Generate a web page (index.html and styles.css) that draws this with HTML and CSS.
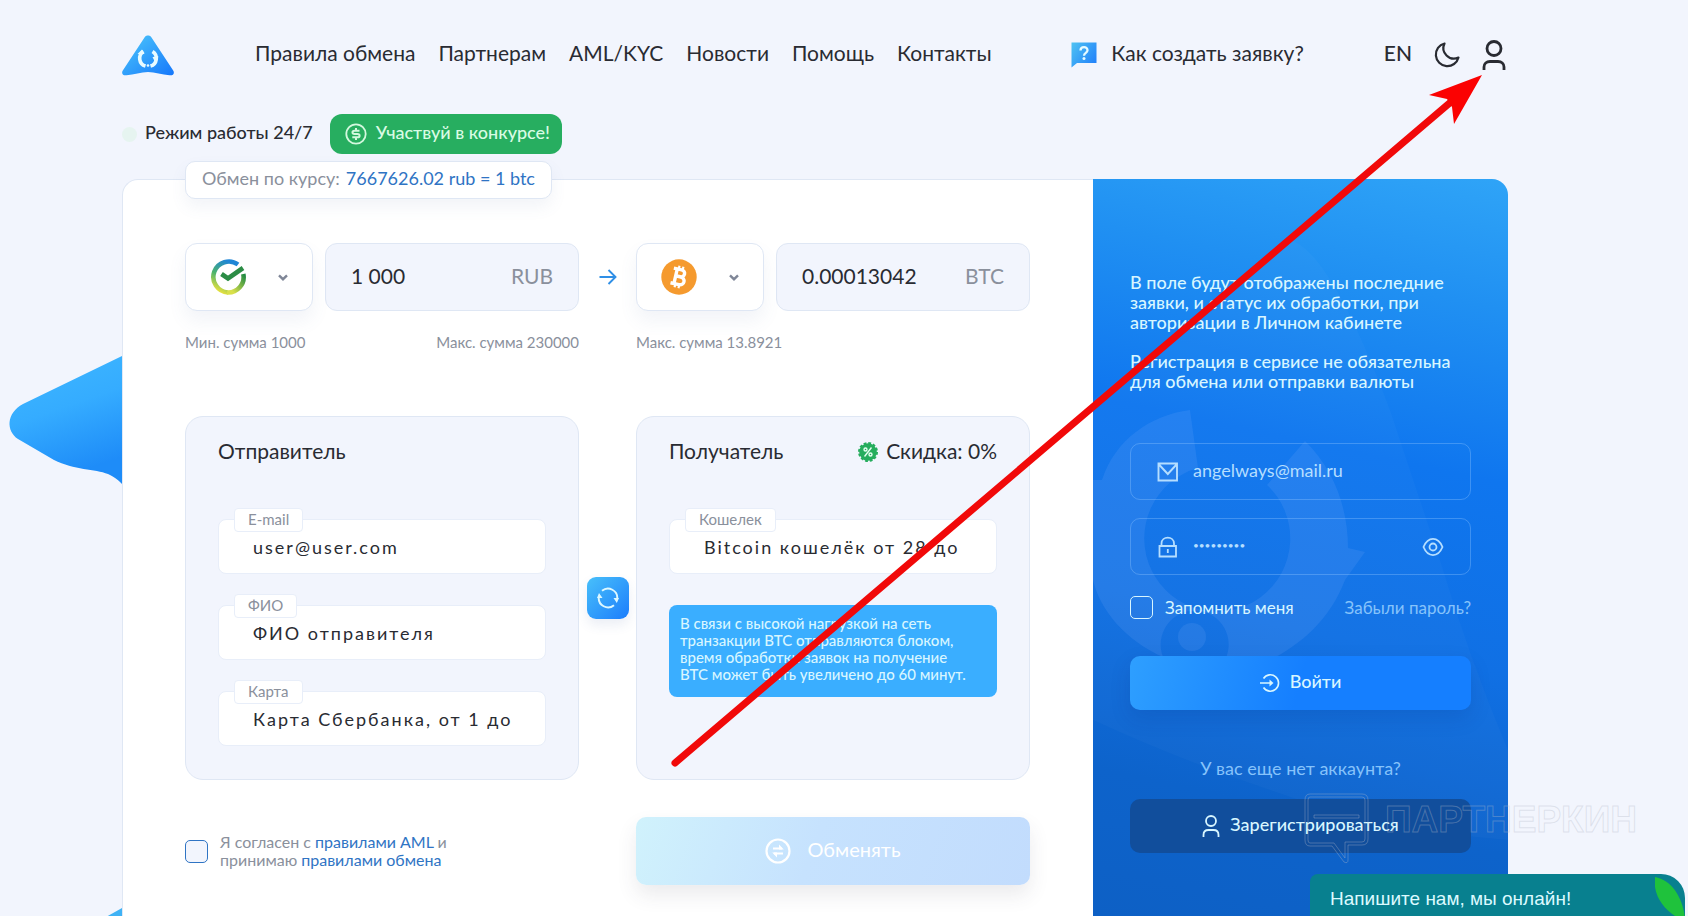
FILE: index.html
```html
<!DOCTYPE html>
<html lang="ru">
<head>
<meta charset="utf-8">
<meta name="viewport" content="width=device-width, initial-scale=1">
<title>Обмен валют</title>
<link rel="stylesheet" href="styles.css">
</head>
<body>
<div class="page">
  <svg class="blob" width="122" height="600" viewBox="0 340 122 600" aria-hidden="true">
    <defs><linearGradient id="gBlob" x1="0" y1="0" x2="0.3" y2="1"><stop offset="0" stop-color="#3fb8ff"/><stop offset="0.5" stop-color="#35acff"/><stop offset="1" stop-color="#1e8cf8"/></linearGradient></defs>
    <path fill="url(#gBlob)" d="M122 356 23 404C6 413 6 431 18 439L54 460C74 470 95 469 108 474 115 477 119 481 122 484Z"/>
    <path fill="#3fb2f5" d="M122 908 106 917H122Z"/>
  </svg>

  <header class="header">
    <a class="logo" href="#" aria-label="Главная">
      <svg width="52" height="41" viewBox="0 0 52 41">
        <defs><linearGradient id="gLogo" x1="0" y1="0" x2="1" y2="1"><stop offset="0.15" stop-color="#45bdfb"/><stop offset="1" stop-color="#1677fb"/></linearGradient></defs>
        <path fill="url(#gLogo)" d="M22.500 2.500C24-.1 28-.1 29.500 2.500L51.200 35.500C53 38.500 51 40.800 47.500 40.300 40 39.800 33 37 26 37 19 37 12 39.800 4.500 40.300 1 40.800-1 38.500.8 35.500Z"/>
        <g fill="none" stroke="#e9fbff" stroke-width="3.600"><path d="M21.500 16.500A8 8 0 0 0 23.500 31"/><path d="M30.500 16.500A8 8 0 0 1 28.500 31"/></g>
        <path fill="#e9fbff" d="M15.500 19 20 14.500 22.500 19ZM36.500 21.500 33.500 28 30.500 22Z"/><circle cx="26" cy="30.500" r="1.300" fill="#e9fbff"/>
      </svg>
    </a>
    <nav class="nav lift">
      <a href="#">Правила обмена</a><a href="#">Партнерам</a><a href="#">AML/KYC</a><a href="#">Новости</a><a href="#">Помощь</a><a href="#">Контакты</a>
    </nav>
    <a class="howto" href="#">
      <svg width="26" height="26" viewBox="0 0 26 26" aria-hidden="true">
        <defs><linearGradient id="gHelp" x1="0" y1="0" x2="1" y2="0.7"><stop offset="0" stop-color="#4fc3f2"/><stop offset="1" stop-color="#2484fa"/></linearGradient></defs>
        <path fill="url(#gHelp)" d="M1 .5H25.500V21H6L.5 25.500V.5Z"/>
        <path fill="none" stroke="#e6fbff" stroke-width="2.300" d="M9.500 8.500C9.500 4 16.500 4 16.500 8.300 16.500 11 13 10.800 13 13.800"/><circle cx="13" cy="16.500" r="1.500" fill="#e6fbff"/>
      </svg>
      <span class="lift">Как создать заявку?</span>
    </a>
    <div class="tools">
      <a class="lang lift" href="#">EN</a>
      <button class="icon-btn" type="button" aria-label="Тёмная тема">
        <svg width="26" height="26" viewBox="0 0 26 26" fill="none" stroke="#292b32" stroke-width="2.200" stroke-linejoin="round"><path d="M10.500 1.500A11.500 11.500 0 1 0 24.500 15.500 10.500 10.500 0 0 1 10.500 1.500Z"/></svg>
      </button>
      <button class="icon-btn" type="button" aria-label="Личный кабинет">
        <svg width="24" height="30" viewBox="0 0 24 30" fill="none" stroke="#292b32" stroke-width="2.800"><circle cx="12" cy="8.500" r="7"/><path d="M2 30V27C2 23.500 4.500 21.500 8 21.500H16C19.500 21.500 22 23.500 22 27V30"/></svg>
      </button>
    </div>
  </header>

  <div class="status">
    <span class="dot"></span>
    <span class="hours lift">Режим работы 24/7</span>
    <a class="contest" href="#">
      <svg width="22" height="22" viewBox="0 0 22 22" fill="none" stroke="#d3f8de" aria-hidden="true"><circle cx="11" cy="11" r="9.700" stroke-width="1.800"/><path stroke-width="2" d="M14.500 7.700H9.500C6.800 7.700 6.800 11 9.500 11H12.500C15.300 11 15.300 14.300 12.500 14.300H7.300M11 5V7.500M11 14.300V17"/></svg>
      <span class="lift">Участвуй в конкурсе!</span>
    </a>
  </div>

  <div class="shell">
    <main class="exchange">
      <div class="rate lift">Обмен по курсу: <span>7667626.02 rub = 1 btc</span></div>

      <form class="form">
        <div class="pair">
          <div class="side">
            <div class="coin">
              <svg width="36" height="36" viewBox="0 0 36 36" aria-hidden="true">
                <defs><linearGradient id="gSb" x1="0.2" y1="1" x2="0.6" y2="0"><stop offset="0" stop-color="#f2e43c"/><stop offset="0.5" stop-color="#4db36b"/><stop offset="1" stop-color="#1f86d6"/></linearGradient><linearGradient id="gSb2" x1="0" y1="1" x2="1" y2="0"><stop offset="0.2" stop-color="#d9e04a"/><stop offset="1" stop-color="#208a43"/></linearGradient></defs>
                <g fill="none" stroke-width="4.600"><path stroke="url(#gSb)" d="M28 5.500A15.500 15.500 0 1 0 18 33.500"/><path stroke="url(#gSb2)" d="M17 33.500A15.500 15.500 0 0 0 33.300 15"/><path stroke="#2b8c45" d="M11.500 15 18 19.500 33 9"/></g>
              </svg>
              <svg class="chev" width="10" height="7" viewBox="0 0 10 7" fill="none" stroke="#7f8697" stroke-width="2.400" aria-hidden="true"><path d="M1 1.300 5 5.200 9 1.300"/></svg>
              <select aria-label="Отдаёте"><option value="sber"></option></select>
            </div>
            <label class="amount lift"><input type="text" value="1 000" aria-label="Сумма RUB"><span>RUB</span></label>
          </div>
          <svg class="arrow" width="18" height="18" viewBox="0 0 18 18" fill="none" stroke="#2f8fe6" stroke-width="1.900" aria-hidden="true"><path d="M.5 9H16M9.500 2 16.500 9 9.500 16"/></svg>
          <div class="side">
            <div class="coin">
              <svg width="36" height="36" viewBox="0 0 36 36" aria-hidden="true">
                <circle cx="18" cy="18" r="17.700" fill="#f59a2e"/>
                <g transform="rotate(13 18 18)" fill="none" stroke="#fff" stroke-width="3.400"><path d="M14.500 10.500V25.500M11 10.500H19C24 10.500 24 17.500 19 17.500H14.500M19 17.500C25.500 17.500 25.500 25.500 19.500 25.500H11"/><path stroke-width="2.200" d="M16 7V10M20 7V10M16 26V29M20 26V29"/></g>
              </svg>
              <svg class="chev" width="10" height="7" viewBox="0 0 10 7" fill="none" stroke="#7f8697" stroke-width="2.400" aria-hidden="true"><path d="M1 1.300 5 5.200 9 1.300"/></svg>
              <select aria-label="Получаете"><option value="btc"></option></select>
            </div>
            <label class="amount lift"><input type="text" value="0.00013042" aria-label="Сумма BTC"><span>BTC</span></label>
          </div>
          <div class="limits"><span>Мин. сумма 1000</span><span>Макс. сумма 230000</span></div>
          <i></i>
          <div class="limits"><span>Макс. сумма 13.8921</span></div>
        </div>

        <div class="cards">
          <section class="card">
            <div class="card-head"><h2>Отправитель</h2></div>
            <div class="field"><label for="f-mail">E-mail</label><input id="f-mail" type="text" placeholder="user@user.com"></div>
            <div class="field"><label for="f-name">ФИО</label><input id="f-name" type="text" placeholder="ФИО отправителя"></div>
            <div class="field"><label for="f-card">Карта</label><input id="f-card" type="text" placeholder="Карта Сбербанка, от 1 до 19 цифр"></div>
          </section>
          <button class="swap" type="button" aria-label="Поменять местами">
            <svg width="22" height="22" viewBox="0 0 22 22" fill="none" stroke="#ddf8ff" stroke-width="1.900"><path d="M5 3.800A9.300 9.300 0 0 1 20.200 12M17 18.200A9.300 9.300 0 0 1 1.800 10"/><path fill="#ddf8ff" stroke="none" d="M16.500 11H22L19.800 16ZM0 11H5.500L2 6Z"/></svg>
          </button>
          <section class="card">
            <div class="card-head"><h2>Получатель</h2>
              <div class="discount">
                <svg width="22" height="24" viewBox="0 -2 22 24" aria-hidden="true"><circle cx="11" cy="11" r="8.800" fill="#25ad5d"/><circle cx="11" cy="11" r="8.900" fill="none" stroke="#25ad5d" stroke-width="2.200" stroke-dasharray="2.800 1.860"/><g fill="none" stroke="#e5fff0" stroke-width="1.400"><path d="M14.500 6.500 7.500 15.500"/><circle cx="8.500" cy="8.500" r="1.500"/><circle cx="13.500" cy="13.500" r="1.500"/></g></svg>
                Скидка: 0%
              </div>
            </div>
            <div class="field"><label for="f-wallet">Кошелек</label><input id="f-wallet" type="text" placeholder="Bitcoin кошелёк от 28 до 40 символов"></div>
            <p class="notice">В связи с высокой нагрузкой на сеть<br>транзакции BTC отправляются блоком,<br>время обработки заявок на получение<br>BTC может быть увеличено до 60 минут.</p>
          </section>
        </div>

        <div class="submit-row">
          <div class="agree">
            <input id="agree" type="checkbox">
            <label for="agree">Я согласен с <a href="#">правилами AML</a> и<br>принимаю <a href="#">правилами обмена</a></label>
          </div>
          <button class="exchange-btn" type="button">
            <svg width="26" height="26" viewBox="0 0 26 26" fill="none" stroke="#fff" stroke-width="2.200" aria-hidden="true"><circle cx="13" cy="13" r="11.500"/><path stroke-width="1.900" d="M8 10.500H17M9 15.500H18"/><path fill="#fff" stroke="none" d="M14 6.500 18.800 11.400H14ZM12 19.500 7.200 14.600H12Z"/></svg>
            <span class="lift">Обменять</span>
          </button>
        </div>
      </form>
    </main>

    <aside class="account">
      <svg class="pattern" width="415" height="740" viewBox="1093 179 415 740" aria-hidden="true">
        <path fill="#fff" opacity=".025" d="M1290 240Q1330 250 1390 410L1440 560Q1470 660 1508 750V840Q1380 830 1270 790 1180 760 1093 720V400Z"/>
        <path fill="#8fb8ff" opacity=".13" fill-rule="evenodd" d="M1190 410 1198 468A73 73 0 1 0 1267 485L1305 441C1335 470 1348 510 1348 548L1365 552 1345 580C1330 620 1300 645 1270 660H1225A34 34 0 1 0 1163 657C1125 640 1100 610 1093 580V480H1102C1115 440 1150 415 1190 410Z"/>
        <circle cx="1192" cy="637" r="14" fill="#8fb8ff" opacity=".13"/>
      </svg>
      <p class="info">В поле будут отображены последние заявки, и статус их обработки, при авторизации в Личном кабинете</p>
      <p class="info">Регистрация в сервисе не обязательна для обмена или отправки валюты</p>
      <form class="login">
        <label class="login-field">
          <svg width="22" height="20" viewBox="0 0 22 20" fill="none" stroke="#b5deff" stroke-width="1.900" aria-hidden="true"><path d="M1.500 1.500H20V18.500H1.500ZM1.500 2 10.800 12 20 2"/></svg>
          <input class="lift" type="text" value="angelways@mail.ru" aria-label="E-mail">
        </label>
        <label class="login-field">
          <svg width="22" height="22" viewBox="0 0 22 22" fill="none" stroke="#b5deff" stroke-width="1.800" aria-hidden="true"><path d="M2.500 10H19V20.500H2.500ZM4.500 10V7.500C4.500-.3 17-.3 17 7.500V10M10.800 13V17"/></svg>
          <input class="pass lift" type="password" value="angelways" aria-label="Пароль">
          <svg width="22" height="22" viewBox="0 0 22 22" fill="none" stroke="#b5deff" stroke-width="1.800" aria-hidden="true"><path d="M1.500 11C6 .2 16 .2 20.500 11 16 21.800 6 21.800 1.500 11Z"/><circle cx="11" cy="11" r="3.500"/></svg>
        </label>
        <div class="remember">
          <input id="remember" type="checkbox"><label for="remember">Запомнить меня</label>
          <a href="#">Забыли пароль?</a>
        </div>
        <button class="login-btn" type="button">
          <svg width="20" height="20" viewBox="0 0 20 20" fill="none" stroke="#d8f6ff" stroke-width="1.600" aria-hidden="true"><path d="M3.500 5.500A8.200 8.200 0 1 1 3.500 14.500M0 10H12"/><path fill="#d8f6ff" stroke="none" d="M9.500 6.500 13.500 10 9.500 13.500Z"/></svg>
          <span class="lift">Войти</span>
        </button>
        <p class="ask">У вас еще нет аккаунта?</p>
        <button class="register" type="button">
          <svg width="18" height="22" viewBox="0 0 18 22" fill="none" stroke="#d8f6ff" stroke-width="1.800" aria-hidden="true"><circle cx="9" cy="6" r="5"/><path d="M1.500 22V20C1.500 17 3.500 15 6.500 15H11.500C14.500 15 16.500 17 16.500 20V22"/></svg>
          <span class="lift">Зарегистрироваться</span>
        </button>
      </form>
    </aside>
  </div>

  <div class="watermark">
    <svg width="66" height="72" viewBox="0 0 66 72" fill="none" stroke="#b4bac8" stroke-opacity=".35" stroke-width="1" aria-hidden="true"><path d="M6 1H58Q64 1 64 7V46Q64 52 58 52H44V67Q44 71 40 69L28 53H6Q1 53 1 47V7Q1 1 6 1Z"/><path d="M6 4H58Q61 4 61 7V46Q61 49 58 49H41V65L30 50H6Q4 50 4 47V7Q4 4 6 4ZM10 22H55V25H10Z"/></svg>
    <span>ПАРТНЕРКИН</span>
  </div>

  <button class="chat" type="button">Напишите нам, мы онлайн!<svg width="30" height="44" viewBox="0 0 30 44" aria-hidden="true"><path fill="#1fc23c" d="M0 0C17 3 29 22 30 44 14 38-3 22 0 0Z"/></svg></button>

  <svg class="pointer" width="830" height="710" viewBox="660 65 830 710" aria-hidden="true">
    <path stroke="#f10909" stroke-width="7" stroke-linecap="round" d="M675 763 1452 101"/>
    <path fill="#fb0202" d="M1482 75 1429 95 1447 99 1452 107 1454 124Z"/>
  </svg>
</div>
</body>
</html>
```
FILE: styles.css
```css
* { box-sizing: border-box; }
body {
  margin: 0;
  background: #f2f5fd;
  color: #292b32;
  font-family: "Lato", "Liberation Sans", sans-serif;
  font-size: 18px;
}
a { color: inherit; text-decoration: none; }
button, input, select { font: inherit; color: inherit; margin: 0; }
button { cursor: pointer; border: 0; }
p, h2 { margin: 0; }
svg { flex: none; display: block; }

.page {
  position: relative;
  display: flex;
  flex-direction: column;
  height: 100vh;
  overflow: hidden;
  padding: 0 180px 0 122px;
}
.blob { position: absolute; left: 0; top: 340px; }

.header { display: flex; align-items: center; height: 110px; font-size: 21px; }
.nav { display: flex; gap: 23px; margin-left: 81px; }
.nav, .howto, .lang { white-space: nowrap; line-height: 28px; }
.howto { display: flex; align-items: center; gap: 14px; margin-left: auto; margin-right: 80px; }
.tools { display: flex; align-items: center; gap: 22px; padding-right: 2px; }
.lang { font-weight: 500; }
.icon-btn { padding: 0; background: none; }

.status { display: flex; align-items: center; height: 48px; font-weight: 500; white-space: nowrap; }
.dot { width: 15px; height: 15px; border-radius: 50%; background: #e6f4f0; margin-right: 8px; }
.hours { margin-right: 17px; }
.contest {
  display: flex;
  align-items: center;
  gap: 9px;
  height: 40px;
  padding: 0 12px 0 15px;
  border-radius: 12px;
  background: #27ae60;
  color: #d9fbe4;
}

.shell { display: grid; grid-template-columns: minmax(0, 1fr) 415px; flex: 1; margin-top: 21px; }
.exchange {
  position: relative;
  padding: 63px 63px 0 62px;
  background: #fff;
  border: 1px solid #dfe7f4;
  border-width: 1px 0 0 1px;
  border-top-left-radius: 16px;
}
.rate {
  position: absolute;
  left: 62px;
  top: -19px;
  display: flex;
  align-items: center;
  gap: 6px;
  height: 38px;
  padding: 0 16px;
  white-space: nowrap;
  border: 1px solid #dfe7f4;
  border-radius: 10px;
  background: #fff;
  color: #8a909c;
  box-shadow: 0 8px 16px rgba(90, 110, 160, .08);
}
.rate span { color: #2f74c4; }

.pair, .cards { display: grid; grid-template-columns: minmax(0, 1fr) 57px minmax(0, 1fr); justify-items: center; align-items: center; }
.side, .limits, .card { width: 100%; }
.side { display: grid; grid-template-columns: 128px minmax(0, 1fr); gap: 12px; height: 68px; }
.coin, .amount { display: flex; align-items: center; justify-content: space-between; border: 1px solid #dfe7f4; border-radius: 12px; }
.coin { position: relative; padding: 0 24px; background: #fff; box-shadow: 0 10px 18px rgba(90, 110, 160, .08); }
.coin select { position: absolute; inset: 0; width: 100%; border: 0; background: none; appearance: none; }
.amount { padding: 0 25px; background: #f2f5fd; font-size: 21px; }
.amount input { width: 0; flex: 1; padding: 0; border: 0; background: none; }
.amount span { color: #8a909c; }
.limits { display: flex; justify-content: space-between; margin-top: 21px; line-height: 20px; font-size: 15px; color: #8a909c; }

.cards { margin-top: 64px; }
.card { height: 364px; padding: 19px 32px; border: 1px solid #dfe7f4; border-radius: 18px; background: #f2f5fd; }
.card-head { display: flex; justify-content: space-between; height: 30px; margin-bottom: 53px; line-height: 30px; font-size: 21px; }
.card-head h2 { font-size: 21px; font-weight: 400; }
.discount { display: flex; align-items: center; gap: 7px; }
.field { position: relative; height: 55px; margin-bottom: 31px; }
.field input {
  width: 100%;
  height: 100%;
  padding: 0 34px;
  border: 1px solid #e8eef9;
  border-radius: 8px;
  background: #fff;
  letter-spacing: 2px;
}
.field input::placeholder { color: #292b32; opacity: 1; }
.field label {
  position: absolute;
  left: 16px;
  top: -11px;
  padding: 0 13px 2px;
  line-height: 20px;
  font-size: 15px;
  color: #8a909c;
  background: #fff;
  border: 1px solid #e8eef9;
  border-radius: 4px;
}
.notice { padding: 10px 11px 14px; border-radius: 8px; background: #3aaeff; color: #d8f6ff; font-size: 15px; font-weight: 500; line-height: 17px; white-space: nowrap; }
.swap {
  display: grid;
  place-items: center;
  width: 42px;
  height: 42px;
  padding: 0;
  border-radius: 9px;
  background: linear-gradient(135deg, #48c0fa, #1c7dfc);
  box-shadow: 0 6px 12px rgba(60, 90, 160, .1);
}

.submit-row { display: grid; grid-template-columns: minmax(0, 1fr) minmax(0, 1fr); column-gap: 57px; align-items: center; margin-top: 37px; }
.agree { display: flex; align-items: center; gap: 12px; font-size: 16px; line-height: 18px; color: #8a909c; }
.agree a { color: #2f74c4; }
input[type="checkbox"] { appearance: none; width: 23px; height: 23px; border: 1px solid #2f74c4; border-radius: 5px; background: #f2f5fd; }
.exchange-btn {
  display: flex;
  align-items: center;
  justify-content: center;
  gap: 16px;
  height: 68px;
  border-radius: 10px;
  background: linear-gradient(110deg, #d0f2fc, #c6e2fe 45%, #c2dcfd);
  color: #fff;
  font-size: 20px;
  box-shadow: 0 10px 20px rgba(60, 60, 80, .1);
}

.account {
  position: relative;
  padding: 93px 37px 0;
  border-top-right-radius: 16px;
  background: linear-gradient(192deg, #2fa4f7 0%, #2090f2 16%, #0f76ef 37%, #1070e4 60%, #0d63cb 82%, #0d60c5 100%);
  color: #d8f6ff;
}
.pattern { position: absolute; left: 0; top: 0; }
.info { position: relative; margin-bottom: 19px; line-height: 20px; font-weight: 500; }
.login { position: relative; display: flex; flex-direction: column; margin-top: 52px; }
.login-field { display: flex; align-items: center; gap: 14px; height: 57px; margin-bottom: 18px; padding: 0 26px; border: 1px solid rgba(150, 200, 255, .35); border-radius: 10px; color: #b5deff; }
.login-field input { flex: 1; width: 0; padding: 0; border: 0; background: none; }
.login-field .pass { font-size: 10px; }
.remember { display: flex; align-items: center; gap: 12px; margin-top: 3px; font-size: 17px; line-height: 20px; }
.remember input[type="checkbox"] { background: none; border-color: #d8f6ff; }
.remember a { margin-left: auto; color: #86c3fb; }
.login-btn, .register { display: flex; align-items: center; justify-content: center; height: 54px; gap: 10px; border-radius: 10px; color: #d8f6ff; font-weight: 500; }
.login-btn { margin-top: 37px; background: linear-gradient(105deg, #2e9fff, #157fff 50%); box-shadow: 0 8px 20px rgba(0, 40, 120, .15); }
.ask { margin: 48px 0 20px; text-align: center; line-height: 21px; color: #86c3fb; }
.register { background: #114e9c; }

.watermark { position: absolute; right: 51px; top: 793px; display: flex; gap: 15px; }
.watermark span { padding-top: 5px; line-height: 44px; font-family: "Liberation Sans", sans-serif; font-size: 37px; font-weight: 700; color: transparent; -webkit-text-stroke: 1px rgba(180, 186, 200, .35); }
.chat {
  position: absolute;
  right: 3px;
  bottom: 0;
  display: flex;
  align-items: center;
  justify-content: space-between;
  width: 375px;
  height: 42px;
  padding: 7px 0 0 20px;
  border-radius: 8px 24px 0 0;
  background: #08808f;
  color: #dcfaff;
  font-family: "Liberation Sans", sans-serif;
  font-size: 19px;
  overflow: hidden;
}
.pointer { position: absolute; left: 660px; top: 65px; pointer-events: none; }

/* Optical centring: text sits slightly above the middle of its row */
.lift, .login-field .lift, .amount.lift { padding-bottom: 4px; }
```
